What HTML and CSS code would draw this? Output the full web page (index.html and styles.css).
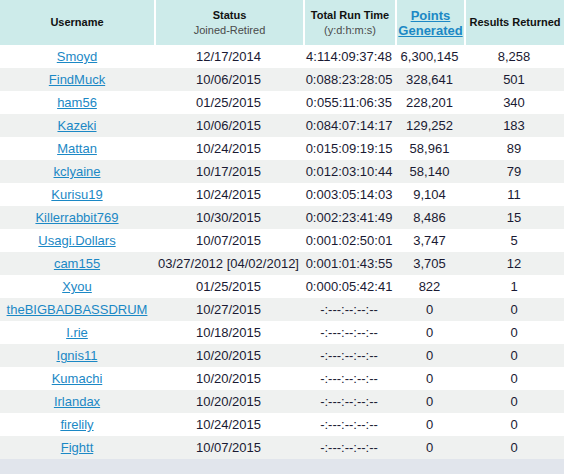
FILE: index.html
```html
<!DOCTYPE html>
<html>
<head>
<meta charset="utf-8">
<link rel="stylesheet" href="styles.css">
</head>
<body>
<table class="stats">
  <colgroup>
    <col class="c-user"><col class="c-status"><col class="c-time"><col class="c-points"><col class="c-results">
  </colgroup>
  <thead>
    <tr>
      <th>Username</th>
      <th>Status<span class="sub">Joined-Retired</span></th>
      <th>Total Run Time<span class="sub">(y:d:h:m:s)</span></th>
      <th><a class="sort" href="#">Points Generated</a></th>
      <th>Results Returned</th>
    </tr>
  </thead>
  <tbody>
    <tr><td><a href="#">Smoyd</a></td><td>12/17/2014</td><td>4:114:09:37:48</td><td>6,300,145</td><td>8,258</td></tr>
    <tr><td><a href="#">FindMuck</a></td><td>10/06/2015</td><td>0:088:23:28:05</td><td>328,641</td><td>501</td></tr>
    <tr><td><a href="#">ham56</a></td><td>01/25/2015</td><td>0:055:11:06:35</td><td>228,201</td><td>340</td></tr>
    <tr><td><a href="#">Kazeki</a></td><td>10/06/2015</td><td>0:084:07:14:17</td><td>129,252</td><td>183</td></tr>
    <tr><td><a href="#">Mattan</a></td><td>10/24/2015</td><td>0:015:09:19:15</td><td>58,961</td><td>89</td></tr>
    <tr><td><a href="#">kclyaine</a></td><td>10/17/2015</td><td>0:012:03:10:44</td><td>58,140</td><td>79</td></tr>
    <tr><td><a href="#">Kurisu19</a></td><td>10/24/2015</td><td>0:003:05:14:03</td><td>9,104</td><td>11</td></tr>
    <tr><td><a href="#">Killerrabbit769</a></td><td>10/30/2015</td><td>0:002:23:41:49</td><td>8,486</td><td>15</td></tr>
    <tr><td><a href="#">Usagi.Dollars</a></td><td>10/07/2015</td><td>0:001:02:50:01</td><td>3,747</td><td>5</td></tr>
    <tr><td><a href="#">cam155</a></td><td>03/27/2012 [04/02/2012]</td><td>0:001:01:43:55</td><td>3,705</td><td>12</td></tr>
    <tr><td><a href="#">Xyou</a></td><td>01/25/2015</td><td>0:000:05:42:41</td><td>822</td><td>1</td></tr>
    <tr><td><a href="#">theBIGBADBASSDRUM</a></td><td>10/27/2015</td><td>-:---:--:--:--</td><td>0</td><td>0</td></tr>
    <tr><td><a href="#">I.rie</a></td><td>10/18/2015</td><td>-:---:--:--:--</td><td>0</td><td>0</td></tr>
    <tr><td><a href="#">Ignis11</a></td><td>10/20/2015</td><td>-:---:--:--:--</td><td>0</td><td>0</td></tr>
    <tr><td><a href="#">Kumachi</a></td><td>10/20/2015</td><td>-:---:--:--:--</td><td>0</td><td>0</td></tr>
    <tr><td><a href="#">Irlandax</a></td><td>10/20/2015</td><td>-:---:--:--:--</td><td>0</td><td>0</td></tr>
    <tr><td><a href="#">firelily</a></td><td>10/24/2015</td><td>-:---:--:--:--</td><td>0</td><td>0</td></tr>
    <tr><td><a href="#">Fightt</a></td><td>10/07/2015</td><td>-:---:--:--:--</td><td>0</td><td>0</td></tr>
  </tbody>
</table>
</body>
</html>
```
FILE: styles.css
```css
html, body {
  margin: 0;
  padding: 0;
  background: #e1e5ec;
  font-family: "Liberation Sans", Arial, sans-serif;
}
.stats {
  width: 564px;
  table-layout: fixed;
  border-collapse: separate;
  border-spacing: 0;
  background: #ffffff;
}
.c-user { width: 154px; }
.c-status { width: 149px; }
.c-time { width: 92px; }
.c-points { width: 69px; }
.c-results { width: 100px; }
.stats th {
  height: 45px;
  padding: 0;
  background: #cdebea;
  color: #111;
  font-size: 11px;
  font-weight: bold;
  text-align: center;
  vertical-align: middle;
  line-height: 15px;
}
.stats th + th {
  border-left: 2px solid #ffffff;
}
.stats th .sub {
  display: block;
  font-weight: normal;
  font-size: 11px;
  color: #4a4a4a;
}
.stats th a.sort {
  font-size: 13px;
  line-height: 15px;
  color: #1b88c5;
  text-decoration: underline;
  display: inline-block;
  padding-top: 1px;
}
.stats td {
  height: 23px;
  padding: 0;
  text-align: center;
  vertical-align: middle;
  font-size: 13px;
  color: #1a1a33;
  white-space: nowrap;
}
.stats tbody tr:nth-child(even) td {
  background: #eff1f0;
}
.stats td a {
  color: #1b88c5;
  text-decoration: underline;
}
```
